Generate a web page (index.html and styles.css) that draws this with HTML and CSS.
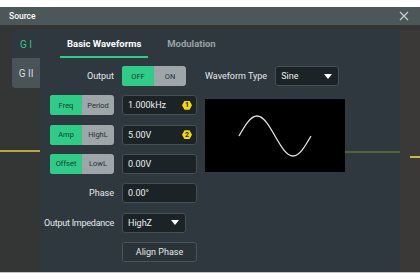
FILE: index.html
```html
<!DOCTYPE html>
<html lang="en">
<head>
    <meta charset="UTF-8">
    <title>Source</title>
    <link rel="stylesheet" href="styles.css">
</head>
<body>
    <div class="screen">
        <div class="titlebar">
            <span class="title">Source</span>
            <svg class="close" width="10" height="10" viewBox="0 0 10 10">
                <path d="M1 1 L9 9 M9 1 L1 9" stroke="#c9d0d2" stroke-width="1.2" fill="none"/>
            </svg>
        </div>

        <div class="workspace">
            <div class="scope-left"></div>

            <div class="side">
                <div class="gtab active">G I</div>
                <div class="gtab">G II</div>
            </div>

            <div class="panel">
                <div class="tabs">
                    <div class="tab active">Basic Waveforms</div>
                    <div class="tab">Modulation</div>
                </div>

                <div class="form">
                    <!-- row 1 -->
                    <div class="label">Output</div>
                    <div class="seg">
                        <span class="on">OFF</span>
                        <span>ON</span>
                    </div>
                    <div class="wave-type">
                        <span class="label">Waveform Type</span>
                        <div class="select">Sine <i class="caret"></i></div>
                    </div>

                    <!-- row 2 -->
                    <div class="seg">
                        <span class="on">Freq</span>
                        <span>Period</span>
                    </div>
                    <div class="field">1.000kHz <b class="badge">1</b></div>
                    <div class="preview">
                        <svg width="140" height="72" viewBox="0 0 140 72">
                            <path d="M34 37 C39.87 26.75 45.49 17 52 17 C58.51 17 64.13 26.75 70 37 C75.87 47.25 81.49 57 88 57 C94.51 57 100.13 47.25 106 37"
                                  stroke="#e2e2e2" stroke-width="1.3" fill="none"/>
                        </svg>
                    </div>

                    <!-- row 3 -->
                    <div class="seg">
                        <span class="on">Amp</span>
                        <span>HighL</span>
                    </div>
                    <div class="field">5.00V <b class="badge">2</b></div>

                    <!-- row 4 -->
                    <div class="seg">
                        <span class="on">Offset</span>
                        <span>LowL</span>
                    </div>
                    <div class="field">0.00V</div>

                    <!-- row 5 -->
                    <div class="label">Phase</div>
                    <div class="field">0.00°</div>
                    <div></div>

                    <!-- row 6 -->
                    <div class="label tight">Output Impedance</div>
                    <div class="select">HighZ <i class="caret"></i></div>
                    <div></div>

                    <!-- row 7 -->
                    <div></div>
                    <button class="btn">Align Phase</button>
                </div>
            </div>

            <div class="scope-right"></div>
        </div>
    </div>
</body>
</html>
```

FILE: styles.css
```css
* {
    margin: 0;
    padding: 0;
    box-sizing: border-box;
}

body {
    width: 420px;
    height: 280px;
    background: #ffffff;
    font-family: Roboto, "Liberation Sans", sans-serif;
    overflow: hidden;
}

.screen {
    margin-top: 7px;
    height: 266px;
    border-bottom: 1px solid #c4c6c6;
    display: flex;
    flex-direction: column;
}

.titlebar {
    height: 18px;
    background: #4c575a;
    display: flex;
    align-items: center;
    justify-content: space-between;
    padding: 0 11px 0 9px;
}

.title {
    color: #ffffff;
    font-size: 8.5px;
    font-weight: 500;
}

.workspace {
    flex: 1;
    display: flex;
    padding-top: 5px;
    background:
        linear-gradient(#b4a637, #b4a637) 0 125px / 40px 2px no-repeat,
        #343636;
}

.scope-left {
    width: 12px;
}

.side {
    width: 28px;
    display: flex;
    flex-direction: column;
}

.gtab {
    height: 30px;
    display: flex;
    align-items: center;
    justify-content: center;
    font-size: 10px;
    color: #d5dadb;
    background: #4a5458;
    border-radius: 0 0 0 4px;
}

.gtab.active {
    height: 28px;
    color: #2ecc87;
    background: #2e383e;
    border-radius: 4px 0 0 0;
}

.panel {
    width: 360px;
    background:
        linear-gradient(#55623a, #55623a) right 0 top 121px / 55px 2px no-repeat,
        #2e383e;
    padding-left: 6px;
}

.tabs {
    height: 28px;
    display: flex;
    gap: 12px;
    padding-left: 14px;
}

.tab {
    padding: 0 7px;
    display: flex;
    align-items: center;
    font-size: 9.5px;
    font-weight: 700;
    color: #9aa3a6;
    border-bottom: 2px solid transparent;
}

.tab.active {
    color: #ffffff;
    border-bottom-color: #2ecc87;
}

.form {
    margin-top: 8px;
    display: grid;
    grid-template-columns: 68px 75px 140px;
    grid-auto-rows: 20px;
    column-gap: 8px;
    row-gap: 9.33px;
}

.label {
    justify-self: end;
    align-self: center;
    white-space: nowrap;
    font-size: 9px;
    color: #e6e9ea;
}

.label.tight {
    letter-spacing: -0.25px;
}

.seg {
    width: 64px;
    display: flex;
    border-radius: 3px;
    overflow: hidden;
    background: #9ea6a9;
}

.form > .seg:not(:nth-child(2)) {
    justify-self: end;
}

.seg span {
    flex: 1;
    display: flex;
    align-items: center;
    justify-content: center;
    font-size: 7.5px;
    color: #263236;
}

.seg span.on {
    background: #2ecc87;
    color: #1d3b30;
}

.field,
.select {
    display: flex;
    align-items: center;
    justify-content: space-between;
    padding: 0 4px 0 5px;
    background: #1c2327;
    border: 1px solid #454f54;
    border-radius: 3px;
    color: #ecefef;
    font-size: 9px;
}

.select {
    width: 64px;
    height: 20px;
    padding-right: 6px;
}

.wave-type {
    display: flex;
    align-items: center;
    gap: 8px;
}

.caret {
    width: 0;
    height: 0;
    border-left: 4.5px solid transparent;
    border-right: 4.5px solid transparent;
    border-top: 5px solid #ffffff;
}

.badge {
    width: 10px;
    height: 9px;
    display: flex;
    align-items: center;
    justify-content: center;
    background: #f2da00;
    color: #1a1a1a;
    font-size: 7px;
    font-weight: 700;
    clip-path: polygon(25% 0, 75% 0, 100% 50%, 75% 100%, 25% 100%, 0 50%);
}

.preview {
    grid-column: 3;
    grid-row: 2 / span 3;
    margin: 4px 0 2px;
    background: #000000;
    display: flex;
}

.btn {
    grid-column: 2;
    background: #2a3338;
    border: 1px solid #4a5458;
    border-radius: 3px;
    color: #e6e9ea;
    font-family: inherit;
    font-size: 9px;
}

.scope-right {
    width: 20px;
    background:
        linear-gradient(#c8b84a, #c8b84a) 10px 126px / 10px 2px no-repeat,
        #3b3937;
}
```
